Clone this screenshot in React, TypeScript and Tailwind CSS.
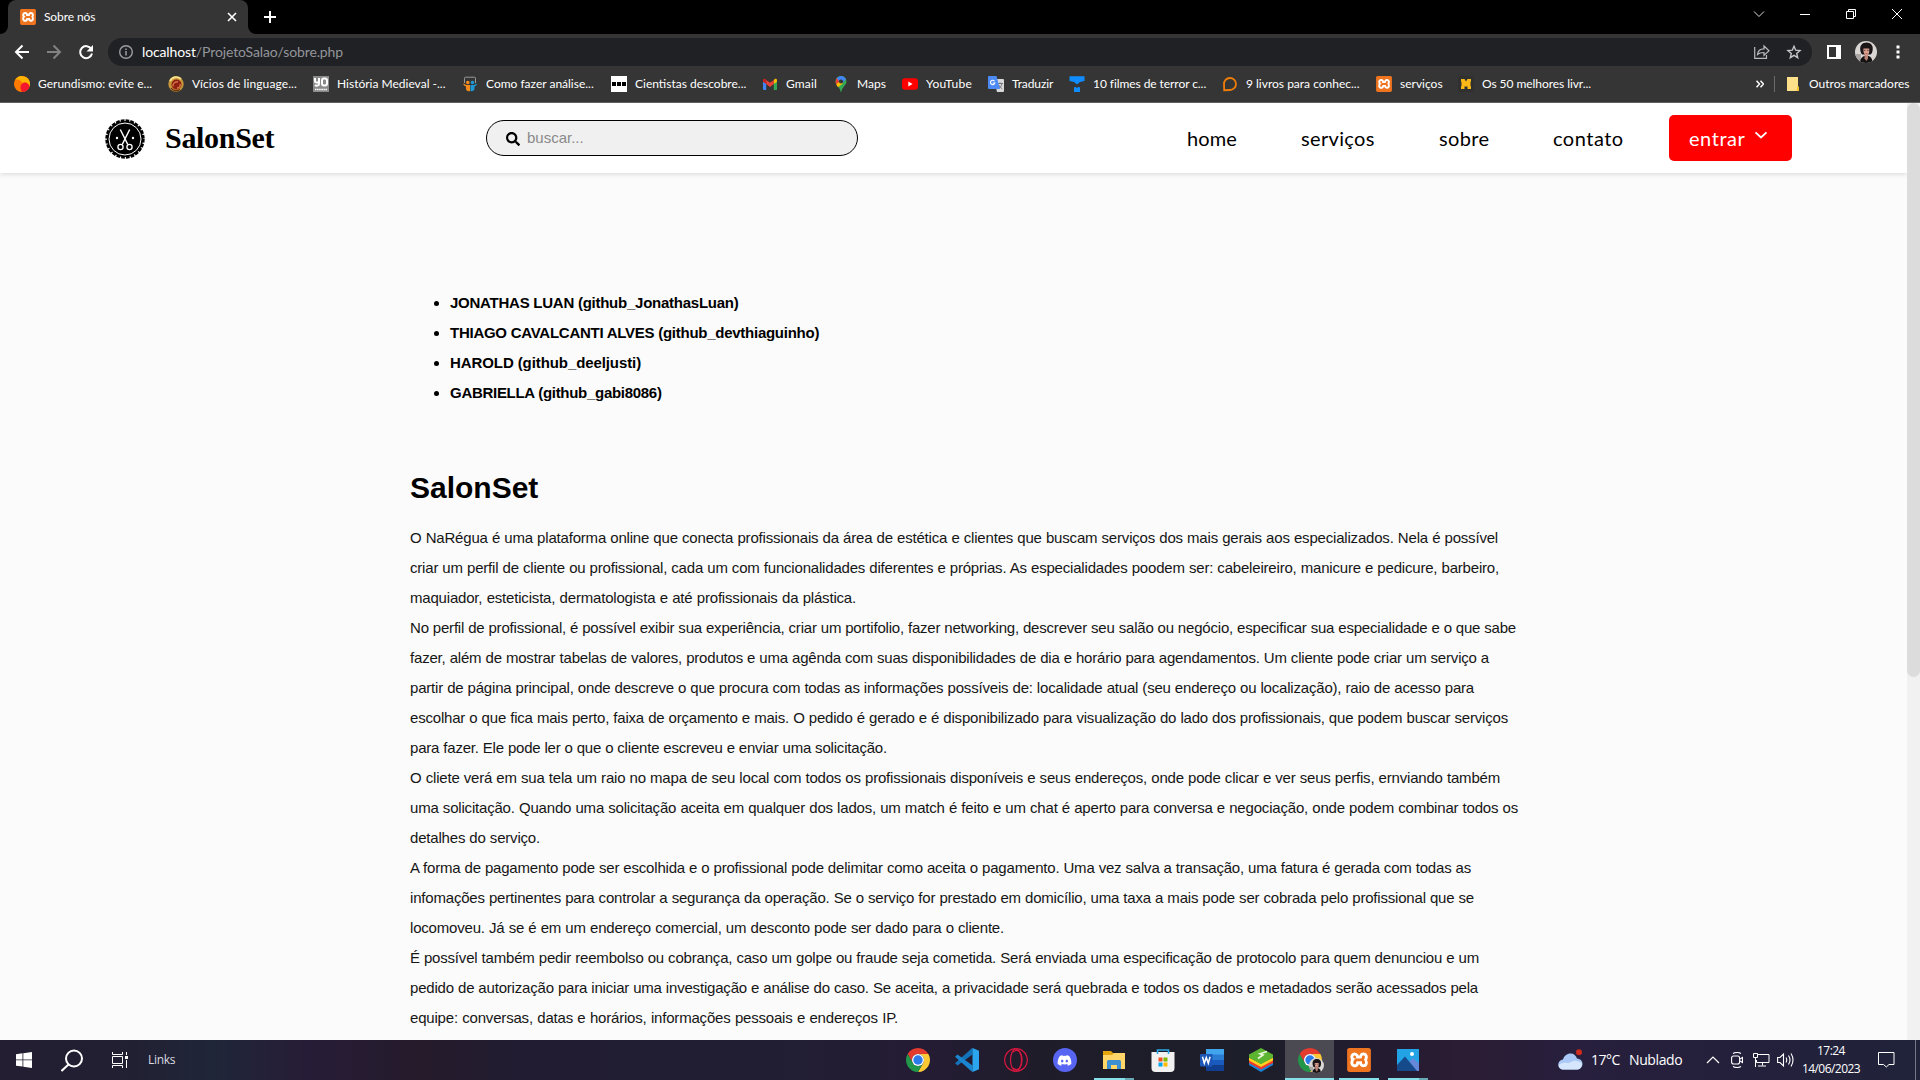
import React from "react";
import { SiXampp } from "react-icons/si";
import { FaDiscord, FaSearch } from "react-icons/fa";

const Xampp = ({ size }: { size: number }) => (
  <span className="relative flex items-center justify-center">
    <span className="absolute inset-[2px] bg-white" />
    <SiXampp size={size} color="#ee7420" className="relative" />
  </span>
);

const Avatar = ({ size }: { size: number }) => (
  <svg width={size} height={size} viewBox="0 0 22 22">
    <clipPath id={"av" + size}><circle cx="11" cy="11" r="11" /></clipPath>
    <g clipPath={`url(#av${size})`}>
      <rect width="22" height="22" fill="#d9d6d4" />
      <path d="M0 13h6v9H0z" fill="#a9a5a3" />
      <path d="M5 22c0-4 2-6.500 4.500-7h4c2.500.5 4 3 4 7z" fill="#151214" />
      <path d="M9.500 13h3.500v4.500l-1.500 2.500-2-2.500z" fill="#b98272" />
      <path d="M5.300 9C4.500 4 8 1.300 11.500 1.400 15.500 1.500 18.300 4 17.700 8.500c-.2 2.500-1 4.500-2.200 5H7.300C6 12.500 5.600 11 5.300 9z" fill="#1b1517" />
      <path d="M8.500 7.500h5.600c.6 3-.2 6.800-2.700 7.300C9 14.300 8 10.500 8.500 7.500z" fill="#d9a090" />
      <path d="M8.800 9.300h1.700M12 9.300h1.700" stroke="#4a2b2a" strokeWidth=".8" />
      <path d="M10.300 12.700h2.200" stroke="#a4524c" strokeWidth=".8" />
    </g>
  </svg>
);

const Chrome = () => (
  <svg width="24" height="24" viewBox="0 0 24 24">
    <path d="M1.61 6A12 12 0 0 1 22.39 6L12 6A6 6 0 0 0 6.8 15z" fill="#e33b2e" />
    <path d="M22.39 6A12 12 0 0 1 12 24L17.2 15A6 6 0 0 0 12 6z" fill="#fcc934" />
    <path d="M1.61 6A12 12 0 0 0 12 24L17.2 15A6 6 0 0 1 6.8 15z" fill="#22974a" />
    <circle cx="12" cy="12" r="6" fill="#fff" />
    <circle cx="12" cy="12" r="4.7" fill="#2b7be9" />
  </svg>
);

const bookmarks: { label: string; slot: string; icon: React.ReactNode }[] = [
  {
    label: "Gerundismo: evite e...", slot: "w-[154px]",
    icon: (
      <svg width="16" height="16" viewBox="0 0 16 16">
        <circle cx="8" cy="8" r="8" fill="#ff7a00" />
        <path d="M1.2 4A8 8 0 0 1 16 8c0 .8-.2 1.500-.4 2.300C14 7 11 5.500 9 7.500 6 3 3 3 1.200 4z" fill="#ffb400" />
        <path d="M6.500 11.500a4.500 4.500 0 0 1 9-.8A8 8 0 0 1 8.500 16c-1.300-1-2-2.700-2-4.500z" fill="#f5172c" />
      </svg>
    ),
  },
  {
    label: "Vícios de linguage...", slot: "w-[145px] tracking-[0.1px]",
    icon: (
      <svg width="16" height="16" viewBox="0 0 16 16">
        <circle cx="8" cy="8" r="7.700" fill="#c8963a" />
        <path d="M2 5a7 7 0 0 1 11-2" stroke="#f8e08c" strokeWidth="1.800" fill="none" />
        <circle cx="8.500" cy="8.500" r="5" fill="#8f1f12" />
        <path d="M5 10.500a4 4 0 0 1 5-4.500M9 12a3 3 0 0 0 3-4" stroke="#d9834a" strokeWidth="1.300" fill="none" />
        <path d="M3 12c2 3 6 3.500 9 1.500" stroke="#6b2d0c" strokeWidth="1.300" fill="none" />
      </svg>
    ),
  },
  {
    label: "História Medieval -...", slot: "w-[149px]",
    icon: (
      <svg width="16" height="16" viewBox="0 0 16 16">
        <rect width="16" height="16" fill="#8a8a8a" />
        <path d="M2 2v3c0 2 4 2 4 0V2v6c0 2-3 2-4 1" stroke="#fff" strokeWidth="2" fill="none" />
        <rect x="9" y="2.500" width="5" height="7" rx="2" stroke="#fff" strokeWidth="2" fill="none" />
        <path d="M2 13.500h12" stroke="#fff" strokeWidth="1.600" strokeDasharray="1.500 .6" />
      </svg>
    ),
  },
  {
    label: "Como fazer análise...", slot: "w-[149px]",
    icon: (
      <svg width="16" height="16" viewBox="0 0 16 16">
        <path d="M2.500 7V2.200c0-.7.4-1 1-1h9c.6 0 1 .3 1 1V7" stroke="#9a9a9a" fill="none" />
        <circle cx="5.800" cy="6.500" r="1.800" fill="#f28a1c" />
        <circle cx="10.500" cy="6.500" r="1.800" fill="#1e97d4" />
        <path d="M1 7.500 4.500 9H8v6c-2 .7-4-.5-4-2v-2.500C2.500 10 1.500 9 1 7.500z" fill="#f28a1c" />
        <path d="M15.200 7.500 12 9H8.500v6c2 .7 4-.5 4-2v-2.500c1.500-.5 2.200-1.500 2.700-3z" fill="#1e97d4" />
      </svg>
    ),
  },
  {
    label: "Cientistas descobre...", slot: "w-[151px]",
    icon: (
      <svg width="16" height="16" viewBox="0 0 16 16">
        <rect width="16" height="16" fill="#fff" />
        <path d="M1 6h4v4H1zM6 6h4v4H6zM11 6h4v4h-4z" fill="#000" />
      </svg>
    ),
  },
  {
    label: "Gmail", slot: "w-[71px] tracking-[0.15px]",
    icon: (
      <svg width="16" height="16" viewBox="0 0 16 16">
        <path d="M1 4.500h3.200V14H2a1 1 0 0 1-1-1z" fill="#4285f4" />
        <path d="M11.800 4.500H15V13a1 1 0 0 1-1 1h-2.200z" fill="#34a853" />
        <path d="M11.800 4l1-1C14 2.200 15 3 15 4.200V5.700l-3.200 2.400z" fill="#fbbc04" />
        <path d="M4.200 8.100V3.900L8 6.700l3.800-2.800v4.200L8 11z" fill="#ea4335" />
        <path d="M1 4.200C1 3 2.200 2.200 3.300 3l.9.800v4.300L1 5.700z" fill="#c5221f" />
      </svg>
    ),
  },
  {
    label: "Maps", slot: "w-[69px]",
    icon: (
      <svg width="16" height="16" viewBox="0 0 16 16">
        <path d="M8 0a5.500 5.500 0 0 1 5.500 5.500C13.500 9 9 11 8.300 16h-.6C7 11 2.500 9 2.500 5.500A5.500 5.500 0 0 1 8 0z" fill="#34a853" />
        <path d="M3 7.800 8 2.500l1.800 5L5 11.300C4.200 10.200 3.400 9.100 3 7.800z" fill="#fbbc04" />
        <path d="M3.800 2 7 5 3.200 8.300C2.200 6 2.500 3.600 3.800 2z" fill="#ea4335" />
        <path d="M3.800 2A5.500 5.500 0 0 1 13 3.300L9.500 7 6 5z" fill="#4285f4" />
        <circle cx="8" cy="5.500" r="2.100" fill="#353535" />
      </svg>
    ),
  },
  {
    label: "YouTube", slot: "w-[86px] tracking-[0.3px]",
    icon: (
      <svg width="16" height="16" viewBox="0 0 16 16">
        <rect y="2.300" width="16" height="11.500" rx="3" fill="#f00" />
        <path d="M6.300 5.600v4.900L10.600 8z" fill="#fff" />
      </svg>
    ),
  },
  {
    label: "Traduzir", slot: "w-[81px] tracking-[-0.1px]",
    icon: (
      <svg width="16" height="16" viewBox="0 0 16 16">
        <path d="M6 3h9a1 1 0 0 1 1 1v11a1 1 0 0 1-1 1H9z" fill="#d8d8d8" />
        <path d="M9.500 7.500H15M12.200 6.500v1M14 7.500c-.5 2.500-2 4-3.500 5M10.800 9c.8 1.700 2 3 3.500 3.800" stroke="#666e78" strokeWidth=".9" fill="none" />
        <path d="M1 0h7.500L12 13H1a1 1 0 0 1-1-1V1a1 1 0 0 1 1-1z" fill="#4c8bf5" />
        <path d="M6.600 5.300A2.200 2.200 0 1 0 6.800 7H4.700" stroke="#fff" strokeWidth="1.100" fill="none" />
      </svg>
    ),
  },
  {
    label: "10 filmes de terror c...", slot: "w-[153px] tracking-[-0.07px]",
    icon: (
      <svg width="16" height="16" viewBox="0 0 16 16">
        <path d="M.5.200h15V5L11 6 8 8.500 5 6 .5 5zM5 11.500l1.500-.8L8 12l1.500-1.300 1.500.8V16H5z" fill="#118cff" />
      </svg>
    ),
  },
  {
    label: "9 livros para conhec...", slot: "w-[154px]",
    icon: (
      <svg width="16" height="16" viewBox="0 0 16 16">
        <path d="M2.200 14.200 2 8.300a6 6 0 1 1 6 5.700z" stroke="#ef7d0a" strokeWidth="1.800" fill="none" />
      </svg>
    ),
  },
  { label: "serviços", slot: "w-[82px]", icon: <Xampp size={16} /> },
  {
    label: "Os 50 melhores livr...", slot: "w-[154px] tracking-[-0.06px]",
    icon: (
      <svg width="16" height="16" viewBox="0 0 16 16">
        <rect width="16" height="16" fill="#303030" />
        <path d="M3 3h3.500L8 5.500 9.500 3H13v2.500l-.5.500v4l.5.500V13H9.500v-2.500h-3V13H3v-2.500l.5-.5V6L3 5.500z" fill="#fbb917" />
      </svg>
    ),
  },
];

function BrowserChrome() {
  return (
    <div className="h-[103px] shrink-0 bg-[#353535] font-['Lato',sans-serif] text-white">
      <div className="flex h-[34px] items-start justify-between bg-black">
        <div className="flex h-[34px]">
          <svg width="8" height="34"><path d="M8 26v8H0a8 8 0 0 0 8-8z" fill="#353535" /></svg>
          <div className="flex w-60 items-center rounded-t-lg bg-[#353535] pr-[10px] pl-3">
            <Xampp size={16} />
            <span className="ml-2 flex-1 text-xs tracking-[-0.1px]">Sobre nós</span>
            <svg width="12" height="12" viewBox="0 0 12 12"><path d="M2 2l8 8M10 2l-8 8" stroke="#fff" strokeWidth="1.600" /></svg>
          </div>
          <svg width="8" height="34"><path d="M0 26v8h8a8 8 0 0 1-8-8z" fill="#353535" /></svg>
          <svg className="mt-[11px] ml-2" width="12" height="12" viewBox="0 0 12 12"><path d="M6 0v12M0 6h12" stroke="#fff" strokeWidth="2" /></svg>
        </div>
        <div className="flex gap-[34px] pt-2 pr-[17px]">
          <svg width="12" height="12" viewBox="0 0 12 12"><path d="M1 3.500l5 5 5-5" stroke="#ddd" fill="none" /></svg>
          <svg width="12" height="12" viewBox="0 0 12 12"><path d="M1 6.500h10" stroke="#fff" /></svg>
          <svg width="12" height="12" viewBox="0 0 12 12"><path d="M1.500 3.500h7v7h-7zM3.500 3.500v-2h7v7h-2" stroke="#fff" fill="none" /></svg>
          <svg width="12" height="12" viewBox="0 0 12 12"><path d="M1 1l10 10M11 1L1 11" stroke="#fff" fill="none" /></svg>
        </div>
      </div>
      <div className="flex h-9 items-center pl-[14px]">
        <svg width="16" height="16" viewBox="0 0 16 16"><path d="M15 8H2M8.500 1.500 2 8l6.500 6.500" stroke="#fff" strokeWidth="2" fill="none" /></svg>
        <svg className="ml-4" width="16" height="16" viewBox="0 0 16 16"><path d="M1 8h13M7.500 1.500 14 8l-6.500 6.500" stroke="#828282" strokeWidth="2" fill="none" /></svg>
        <svg className="ml-4" width="16" height="16" viewBox="0 0 16 16">
          <path d="M13.300 5A6 6 0 1 0 14 9.500" stroke="#fff" strokeWidth="2" fill="none" />
          <path d="M15 1v6.500H8.500z" fill="#fff" />
        </svg>
        <div className="ml-[14px] flex h-7 w-[1704px] items-center rounded-full bg-[#202124] pr-[10px] pl-[11px]">
          <svg width="14" height="14" viewBox="0 0 14 14"><circle cx="7" cy="7" r="6.300" stroke="#9a9ea3" strokeWidth="1.400" fill="none" /><path d="M7 6v4.500M7 3.400v1.500" stroke="#9a9ea3" strokeWidth="1.500" /></svg>
          <span className="ml-[9px] flex-1 text-sm tracking-[-0.13px] text-[#93959a]"><span className="text-white">localhost</span>/ProjetoSalao/sobre.php</span>
          <svg width="16" height="16" viewBox="0 0 16 16"><path d="M.7 3v11.300h11.800V11M3.500 10.500c.3-3.500 2.500-5.700 6.500-5.700V2l5 4.800-5 4.600V8.500c-3 0-5 .5-6.500 2z" stroke="#b8b9bb" strokeWidth="1.200" fill="none" /></svg>
          <svg className="ml-4" width="16" height="16" viewBox="0 0 16 16"><path d="M8 2.200l1.700 4 4.300.4-3.300 2.800 1 4.300L8 11.400l-3.700 2.300 1-4.300L2 6.600l4.300-.4z" stroke="#c4c5c7" strokeWidth="1.400" fill="none" /></svg>
        </div>
        <svg className="ml-[15px]" width="14" height="14" viewBox="0 0 14 14"><path d="M0 0h14v14H0zM2 2v10h7V2z" fill="#fff" fillRule="evenodd" /></svg>
        <div className="ml-[14px]"><Avatar size={22} /></div>
        <svg className="ml-[19px]" width="4" height="14" viewBox="0 0 4 14"><path d="M.5.500h3v3h-3zM.5 5.500h3v3h-3zM.5 10.500h3v3h-3z" fill="#fff" /></svg>
      </div>
      <div className="flex h-[33px] items-center border-b border-[#5f5f5f] pb-[5px] pl-[14px] text-xs whitespace-nowrap">
        {bookmarks.map((b) => (
          <div key={b.label} className={`flex shrink-0 items-center gap-2 ${b.slot}`}>
            {b.icon}
            <span>{b.label}</span>
          </div>
        ))}
        <svg className="ml-[144px]" width="8" height="8" viewBox="0 0 8 8"><path d="M.5.800 3.500 4 .5 7.200M4.500.800 7.500 4l-3 3.200" stroke="#fff" strokeWidth="1.500" fill="none" /></svg>
        <div className="ml-[10px] h-4 w-px bg-[#6b6b6b]" />
        <svg className="ml-3" width="12" height="14" viewBox="0 0 12 14"><path d="M0 0h11v10h1v4H0z" fill="#ffe08a" /><path d="M10.500 9.500H12V14H9.500z" fill="#f4c02f" /></svg>
        <span className="ml-[10px]">Outros marcadores</span>
      </div>
    </div>
  );
}

function SalonLogo() {
  return (
    <svg className="mt-px" width="40" height="40" viewBox="0 0 40 40">
      <circle cx="20" cy="20" r="18" fill="#000" />
      <circle cx="20" cy="20" r="18.400" fill="none" stroke="#000" strokeWidth="2.600" strokeDasharray="3.700 1.117" />
      <circle cx="20" cy="20" r="16" fill="none" stroke="#fff" strokeWidth="1" />
      <path d="M15.300 10.500 22.800 25.500M24.700 10.500 17.200 25.500" stroke="#fff" strokeWidth="1.500" />
      <circle cx="15.500" cy="28" r="2.600" stroke="#fff" strokeWidth="1.300" fill="none" />
      <circle cx="24.500" cy="28" r="2.600" stroke="#fff" strokeWidth="1.300" fill="none" />
      <circle cx="12" cy="19" r="1.200" fill="#fff" />
      <circle cx="28" cy="19" r="1.200" fill="#fff" />
    </svg>
  );
}

function SiteHeader() {
  return (
    <header className="relative flex h-[70px] items-center bg-white pl-[105px] shadow-[0_1px_5px_rgba(0,0,0,0.15)]">
      <SalonLogo />
      <span className="ml-5 w-[321px] font-['Liberation_Serif',serif] text-[30px] leading-none font-bold tracking-[-0.3px] text-black">SalonSet</span>
      <div className="flex h-9 w-[372px] items-center rounded-full border border-black bg-[#f0f0f0] pl-[19px]">
        <FaSearch size={14} color="#000" className="mt-px" />
        <span className="mt-px ml-[7px] text-[15px] text-[#8a8a8a]">buscar...</span>
      </div>
      <nav className="ml-[329px] flex font-['Lato',sans-serif] text-[20px] text-black">
        <a className="w-[114px] tracking-[0.1px]">home</a>
        <a className="w-[138px] tracking-[0.35px]">serviços</a>
        <a className="w-[114px] tracking-[0.35px]">sobre</a>
        <a className="w-[116px] tracking-[0.5px]">contato</a>
      </nav>
      <button className="flex h-[46px] w-[123px] items-center rounded-[5px] bg-[#ff0000] pl-5 font-['Lato',sans-serif] text-[20px] tracking-[0.55px] text-white">
        entrar
        <svg className="mb-[7px] ml-[9px]" width="14" height="8" viewBox="0 0 14 8"><path d="M1.500 1.300 7 6.500l5.500-5.200" stroke="#fff" strokeWidth="1.800" fill="none" /></svg>
      </button>
    </header>
  );
}

const authors: [string, string][] = [
  ["tracking-[-0.25px]", "JONATHAS LUAN (github_JonathasLuan)"],
  ["tracking-[-0.26px]", "THIAGO CAVALCANTI ALVES (github_devthiaguinho)"],
  ["tracking-[-0.09px]", "HAROLD (github_deeljusti)"],
  ["tracking-[-0.29px]", "GABRIELLA (github_gabi8086)"],
];

const lines: [string, string][] = [
  ["w-[1088px]", "O NaRégua é uma plataforma online que conecta profissionais da área de estética e clientes que buscam serviços dos mais gerais aos especializados. Nela é possível"],
  ["w-[1089px]", "criar um perfil de cliente ou profissional, cada um com funcionalidades diferentes e próprias. As especialidades poodem ser: cabeleireiro, manicure e pedicure, barbeiro,"],
  ["w-[446px]", "maquiador, esteticista, dermatologista e até profissionais da plástica."],
  ["w-[1106px]", "No perfil de profissional, é possível exibir sua experiência, criar um portifolio, fazer networking, descrever seu salão ou negócio, especificar sua especialidade e o que sabe"],
  ["w-[1079px]", "fazer, além de mostrar tabelas de valores, produtos e uma agênda com suas disponibilidades de dia e horário para agendamentos. Um cliente pode criar um serviço a"],
  ["w-[1064px]", "partir de página principal, onde descreve o que procura com todas as informações possíveis de: localidade atual (seu endereço ou localização), raio de acesso para"],
  ["w-[1098px]", "escolhar o que fica mais perto, faixa de orçamento e mais. O pedido é gerado e é disponibilizado para visualização do lado dos profissionais, que podem buscar serviços"],
  ["w-[477px]", "para fazer. Ele pode ler o que o cliente escreveu e enviar uma solicitação."],
  ["w-[1090px]", "O cliete verá em sua tela um raio no mapa de seu local com todos os profissionais disponíveis e seus endereços, onde pode clicar e ver seus perfis, ernviando também"],
  ["w-[1108px]", "uma solicitação. Quando uma solicitação aceita em qualquer dos lados, um match é feito e um chat é aperto para conversa e negociação, onde podem combinar todos os"],
  ["w-[130px]", "detalhes do serviço."],
  ["w-[1061px]", "A forma de pagamento pode ser escolhida e o profissional pode delimitar como aceita o pagamento. Uma vez salva a transação, uma fatura é gerada com todas as"],
  ["w-[1064px]", "infomações pertinentes para controlar a segurança da operação. Se o serviço for prestado em domicílio, uma taxa a mais pode ser cobrada pelo profissional que se"],
  ["w-[594px]", "locomoveu. Já se é em um endereço comercial, um desconto pode ser dado para o cliente."],
  ["w-[1069px]", "É possível também pedir reembolso ou cobrança, caso um golpe ou fraude seja cometida. Será enviada uma especificação de protocolo para quem denunciou e um"],
  ["w-[1068px]", "pedido de autorização para iniciar uma investigação e análise do caso. Se aceita, a privacidade será quebrada e todos os dados e metadados serão acessados pela"],
  ["w-[488px]", "equipe: conversas, datas e horários, informações pessoais e endereços IP."],
];

function Page() {
  return (
    <main className="flex-1 pt-[115px] pl-[410px] text-[15px] leading-[30px] text-black">
      <ul className="list-disc pl-10 font-bold">
        {authors.map(([c, a]) => <li key={a} className={c}>{a}</li>)}
      </ul>
      <h1 className="mt-[59px] mb-[15px] text-[30px] leading-[41px] font-bold">SalonSet</h1>
      {lines.map(([w, t]) => (
        <p key={t} className={`tracking-[-0.19px] whitespace-nowrap text-[#161616] [text-align-last:justify] ${w}`}>{t}</p>
      ))}
    </main>
  );
}

const apps: { name: string; slot: string; bar: string; icon: React.ReactNode }[] = [
  { name: "chrome", slot: "", bar: "", icon: <Chrome /> },
  {
    name: "code", slot: "", bar: "",
    icon: (
      <svg width="24" height="24" viewBox="0 0 24 24">
        <path d="M17.500 0v6.500L2.500 17.500 0 15.300 17 .200z" fill="#1372b8" />
        <path d="M17.500 24v-6.500L2.500 6.500 0 8.700 17 23.800z" fill="#1b86cf" />
        <path d="M17.500 0 24 2.800v18.400L17.500 24z" fill="#2ba6ee" />
      </svg>
    ),
  },
  {
    name: "opera", slot: "", bar: "",
    icon: (
      <svg width="24" height="24" viewBox="0 0 24 24" fill="none" stroke="#d8173f" strokeWidth="1.200">
        <circle cx="12" cy="12" r="11.300" />
        <ellipse cx="12" cy="12" rx="5.500" ry="11" />
        <path d="M9 4c6-4.500 9 2 9 8s-3 12.500-9 8" />
      </svg>
    ),
  },
  {
    name: "discord", slot: "", bar: "",
    icon: <span className="flex size-6 items-center justify-center rounded-full bg-[#5865f2]"><FaDiscord size={15} color="#fff" /></span>,
  },
  {
    name: "explorer", slot: "", bar: "w-10 bg-[linear-gradient(90deg,#85e0ea_77%,#67a9b5_77%)]",
    icon: (
      <svg width="22" height="20" viewBox="0 0 22 20">
        <path d="M0 1h8l2 2h12v16H0z" fill="#e5a50f" />
        <path d="M0 5h9l2-2h11v16H0z" fill="#ffd667" />
        <path d="M4 19v-7.500C4 10.500 5 10 6 10h10c1 0 2 .5 2 1.500V19h-4v-4H8v4z" fill="#3c8fd0" />
      </svg>
    ),
  },
  {
    name: "store", slot: "", bar: "",
    icon: (
      <svg width="24" height="24" viewBox="0 0 24 24">
        <path d="M.5 4h23v16a4 4 0 0 1-4 4h-15a4 4 0 0 1-4-4z" fill="#f1f1f1" />
        <path d="M6.500 6V2h11v4" stroke="#2ba9e8" strokeWidth="1.600" fill="none" />
        <path d="M7.500 9.500h4v4h-4z" fill="#f25022" /><path d="M12.500 9.500h4v4h-4z" fill="#7fba00" />
        <path d="M7.500 14.500h4v4h-4z" fill="#00a4ef" /><path d="M12.500 14.500h4v4h-4z" fill="#ffb900" />
      </svg>
    ),
  },
  {
    name: "word", slot: "", bar: "",
    icon: (
      <svg width="24" height="22" viewBox="0 0 24 22">
        <path d="M6 0h18v6H6z" fill="#41a5ee" /><path d="M6 5.500h18V11H6z" fill="#2b7cd3" />
        <path d="M6 11h18v5.500H6z" fill="#185abd" /><path d="M6 16.500h18V22H6z" fill="#103f91" />
        <rect y="5" width="12.500" height="12.500" rx="1" fill="#1c57b5" />
        <path d="M2.500 7.800 4.300 14.200 6.300 8.500l2 5.700 1.800-6.400" stroke="#fff" strokeWidth="1.500" fill="none" />
      </svg>
    ),
  },
  {
    name: "bluestacks", slot: "", bar: "",
    icon: (
      <svg width="24" height="24" viewBox="0 0 24 24">
        <path d="M0 14.500 12 20l12-5.500V17l-12 7L0 17z" fill="#1683d8" />
        <path d="M0 12 12 18l12-6v3L12 21.500 0 15z" fill="#ef3b2c" />
        <path d="M0 9.500 12 15.500 24 9.500v3L12 19 0 12.500z" fill="#ffd21f" />
        <path d="M12 0 24 6.500v3L12 16.200 0 9.500v-3z" fill="#5cb531" />
        <path d="M18 3.500 11 5.800l3 1.200-5 3.500" stroke="#e8f7d8" strokeWidth="1.700" fill="none" />
      </svg>
    ),
  },
  {
    name: "chrome-profile", slot: "bg-[#4b4952]", bar: "w-full bg-[#85e0ea]",
    icon: <span className="relative"><Chrome /><span className="absolute top-[10px] left-[11px]"><Avatar size={15} /></span></span>,
  },
  { name: "xampp", slot: "", bar: "w-10 bg-[#85e0ea]", icon: <Xampp size={24} /> },
  {
    name: "photos", slot: "", bar: "w-10 bg-[linear-gradient(90deg,#85e0ea_78%,#67a9b5_78%)]",
    icon: (
      <svg width="22" height="22" viewBox="0 0 22 22">
        <rect width="22" height="22" fill="#22a3e6" />
        <path d="M10 14.500 16 9l6 5.500V22H10z" fill="#6688d8" />
        <path d="M0 16 8 7.500 20 22H0z" fill="#154b8b" />
        <circle cx="15" cy="5" r="2" fill="#fff" />
      </svg>
    ),
  },
];

function Taskbar() {
  return (
    <footer className="flex h-10 shrink-0 bg-[linear-gradient(90deg,#231e31_0%,#221f32_6%,#1f2638_11%,#271c37_16%,#251b2b_22%,#211c31_27%,#211e33_40%,#241c34_48%,#1f1c2a_54%,#1c1e29_65%,#251b32_73%,#2b1d33_76%,#271f3d_82%,#24203b_90%,#20233a_100%)] font-['Open_Sans',sans-serif] text-white">
      <div className="flex w-[893px] items-center pl-4">
        <svg width="16" height="16" viewBox="0 0 16 16"><path d="M0 2.200 6.500 1.300v6.200H0zM7.300 1.200 16 0v7.500H7.300zM0 8.300h6.500v6.200L0 13.700zM7.300 8.300H16V16l-8.700-1.200z" fill="#fff" /></svg>
        <svg className="ml-[29px]" width="23" height="23" viewBox="0 0 23 23"><circle cx="13" cy="9.500" r="8" stroke="#fff" strokeWidth="2" fill="none" /><path d="M7.500 15.500.5 22" stroke="#fff" strokeWidth="2" /></svg>
        <svg className="ml-[28px]" width="17" height="16" viewBox="0 0 17 16" fill="none" stroke="#fff" strokeWidth="1"><path d="M.5 0v2.500h10V0M.5 16v-2.500h10V16M.5 4.500h10v7H.5zM14.500 0v3M14.500 8v8" /><path d="M13 4h3v3h-3z" fill="#fff" stroke="none" /></svg>
        <span className="ml-[19px] text-xs tracking-[-0.3px] text-[#dcdce0]">Links</span>
      </div>
      <div className="flex">
        {apps.map((a) => (
          <div key={a.name} className={`relative flex w-[49px] items-center justify-center ${a.slot}`}>
            {a.icon}
            {a.bar && <span className={`absolute bottom-0 h-[2px] ${a.bar}`} />}
          </div>
        ))}
      </div>
      <div className="flex flex-1 items-center pl-[126px]">
        <svg width="25" height="22" viewBox="0 0 25 22">
          <path d="M5.500 20.500a5 5 0 0 1-.5-10C6 7 9 4.500 12.500 4.500S18 6.500 19 9.500a5.500 5.500 0 0 1 0 11z" fill="#a9c8f5" />
          <path d="M5.500 20.500c-3 0-5-2-4.800-4.500C6 12 9 15 12 13.500c4-3 8-2 11.800.5.500 4-2 6.500-5 6.500z" fill="#d6e6fc" />
          <circle cx="21" cy="3.200" r="3" fill="#cf2a1e" />
        </svg>
        <span className="ml-2 w-[38px] text-sm tracking-[-0.5px]">17°C</span>
        <span className="w-[77px] text-sm tracking-[-0.4px]">Nublado</span>
        <svg width="14" height="8" viewBox="0 0 14 8"><path d="M1 7l6-6 6 6" stroke="#fff" strokeWidth="1.200" fill="none" /></svg>
        <svg className="ml-[11px]" width="12" height="16" viewBox="0 0 12 16" fill="none" stroke="#fff" strokeWidth="1.100"><path d="M2 1.500q4-2 8 0M2 14.500q4 2 8 0M9 7l2.500-1.500v5L9 9" /><rect x=".6" y="4" width="8" height="8" rx="2" /></svg>
        <svg className="ml-[10px]" width="17" height="16" viewBox="0 0 17 16" fill="none" stroke="#fff"><path d="M5 2.500h11v8H3.500V8M9.500 10.500v3M5 14h8M.5 1.500h4v4h-4zM2.500 5.500V15" /></svg>
        <svg className="ml-[7px]" width="17" height="16" viewBox="0 0 17 16" fill="none" stroke="#fff" strokeWidth="1.100"><path d="M.6 5.500H3l3.500-3.500v12L3 10.500H.6zM9 5.500q1.500 2.500 0 5M11.500 3.500q3 4.500 0 9M14 1.500q4 6.500 0 13" /></svg>
        <div className="ml-1 flex w-[66px] flex-col items-center pb-px text-xs leading-[18px] tracking-[-0.55px]">
          <span>17:24</span>
          <span>14/06/2023</span>
        </div>
        <svg className="ml-[14px]" width="17" height="16" viewBox="0 0 17 16" fill="none" stroke="#fff"><path d="M.5.500h15.500v12H11L8.300 15 5.500 12.500h-5z" /></svg>
        <div className="ml-auto h-10 w-[5px] border-l border-[#77778a]" />
      </div>
    </footer>
  );
}

export default function App() {
  return (
    <div className="flex h-[1080px] w-[1920px] flex-col overflow-hidden font-['Liberation_Sans',sans-serif]">
      <BrowserChrome />
      <div className="flex min-h-0 flex-1">
        <div className="flex min-h-0 flex-1 flex-col overflow-hidden bg-[#fbfbfb]">
          <SiteHeader />
          <Page />
        </div>
        <div className="w-[13px] bg-[#f1f1f1]">
          <div className="h-[574px] rounded-full bg-[#dcdcdc]" />
        </div>
      </div>
      <Taskbar />
    </div>
  );
}
